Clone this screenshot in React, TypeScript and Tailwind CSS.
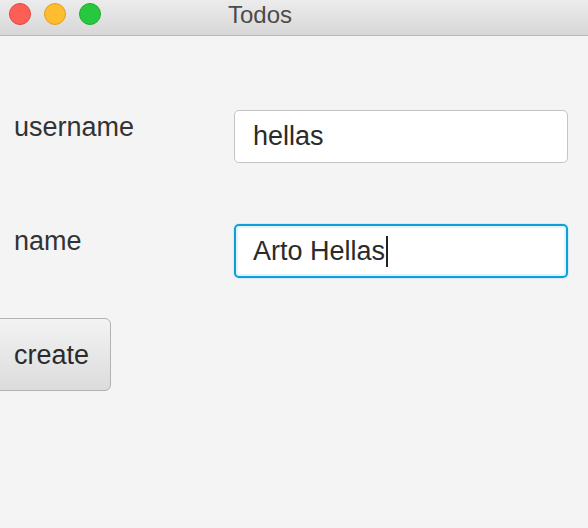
export default function App() {
  return (
    <div className="w-[588px] h-[528px] overflow-hidden bg-[#f4f4f4] font-['Liberation_Sans',Arial,sans-serif] text-[#333333]">
      {/* title bar */}
      <div className="h-[36px] flex items-start bg-gradient-to-b from-[#ececec] to-[#d7d7d7] border-b border-[#b9b9b9]">
        <div className="flex gap-[13px] pl-[9px] pt-[3px]">
          <span className="w-[22px] h-[22px] rounded-full bg-[#fd5f57] border border-[#e2463f]" />
          <span className="w-[22px] h-[22px] rounded-full bg-[#febc2e] border border-[#dfa023]" />
          <span className="w-[22px] h-[22px] rounded-full bg-[#27c840] border border-[#1dad2b]" />
        </div>
        <div className="ml-[127px] pt-[1px] text-[24px] leading-[28px] text-[#4b4b4b]">Todos</div>
      </div>

      <div className="pt-[74px] flex flex-col">
        <div className="flex items-start">
          <div className="w-[234px] pl-[14px] mt-[2px] text-[27px] leading-[30px]">username</div>
          <div className="w-[334px] h-[53px] flex items-center pl-[18px] bg-white border border-[#c4c4c4] rounded-[5px] text-[27px] leading-[31px] text-[#2b2b2b]">
            hellas
          </div>
        </div>

        <div className="flex items-start mt-[61px]">
          <div className="w-[234px] pl-[14px] mt-[2px] text-[27px] leading-[30px]">name</div>
          <div className="w-[334px] h-[54px] flex items-center pl-[17px] bg-white border-2 border-[#0e9fd8] rounded-[5px] shadow-[0_0_0_1px_#d3ecf7,inset_0_0_0_2px_#e3f3fa] text-[27px] leading-[31px] text-[#2b2b2b]">
            Arto Hellas
            <span className="w-[1.5px] h-[31px] bg-[#222222] ml-[1px]" />
          </div>
        </div>

        <div className="mt-[40px] ml-[-12px] w-[123px] h-[73px] flex items-center pl-[25px] rounded-[6px] border border-[#b2b2b2] bg-gradient-to-b from-[#f3f3f3] to-[#dcdcdc] text-[27px] leading-[30px] text-[#2b2b2b]">
          create
        </div>
      </div>
    </div>
  );
}
